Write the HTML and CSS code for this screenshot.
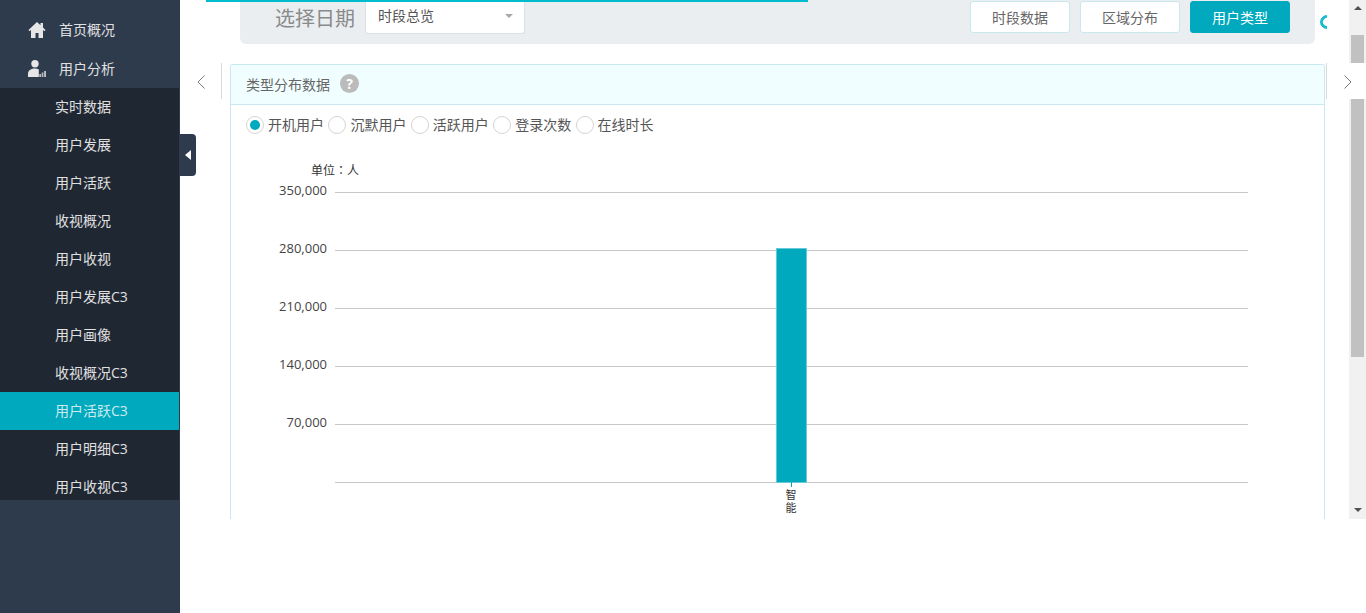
FILE: index.html
```html
<!DOCTYPE html>
<html>
<head>
    <meta charset="utf-8">
    <link rel="stylesheet" href="styles.css">
</head>
<body>
    <div id="sidebar">
        <div class="top-item">
            <svg class="top-icon" viewBox="0 0 18 18"><path d="M9 1 0.5 9l1 1.2L3 9v8h4.500v-5h3v5H15V9l1.500 1.200 1-1.200L15 6.600V2h-2.500v2.300z" fill="#e6e6e6"/></svg>
            <span class="top-label">首页概况</span>
        </div>
        <div class="top-item">
            <svg class="top-icon" viewBox="0 0 18 18"><circle cx="7" cy="3.800" r="3.700" fill="#e6e6e6"/><path d="M0 17v-3.500C0 10.500 3.200 8.500 7 8.500c1.500 0 2.800.3 3.800 1V17z" fill="#e6e6e6"/><path d="M11.300 17v-3h1.700v3zM13.700 17v-4.500h1.700V17zM16.100 17v-6H18v6z" fill="#bdbdbd"/></svg>
            <span class="top-label">用户分析</span>
        </div>
        <ul id="submenu">
            <li>实时数据</li>
            <li>用户发展</li>
            <li>用户活跃</li>
            <li>收视概况</li>
            <li>用户收视</li>
            <li>用户发展C3</li>
            <li>用户画像</li>
            <li>收视概况C3</li>
            <li class="active">用户活跃C3</li>
            <li>用户明细C3</li>
            <li>用户收视C3</li>
        </ul>
        <div id="collapse"><span class="collapse-arrow"></span></div>
    </div>

    <div id="main">
        <div id="content">
            <div id="progress"></div>
            <div id="spinner"></div>
            <div id="filter">
                <span class="filter-label">选择日期</span>
                <div class="select">
                    <span>时段总览</span>
                    <span class="caret"></span>
                </div>
                <div class="tabs">
                    <div class="tab">时段数据</div>
                    <div class="tab">区域分布</div>
                    <div class="tab current">用户类型</div>
                </div>
            </div>
            <div id="row">
                <div class="side side-left">
                    <svg class="chevron" viewBox="0 0 8 14"><path d="M7.500 .5 1 7l6.500 6.500" fill="none" stroke="#777c83" stroke-width="1"/></svg>
                </div>
                <div id="panel">
                    <div class="panel-head">
                        <span>类型分布数据</span>
                        <span class="help">?</span>
                    </div>
                    <div class="radios">
                        <label class="radio on"><i></i>开机用户</label>
                        <label class="radio"><i></i>沉默用户</label>
                        <label class="radio"><i></i>活跃用户</label>
                        <label class="radio"><i></i>登录次数</label>
                        <label class="radio"><i></i>在线时长</label>
                    </div>
                    <svg id="chart" viewBox="231 150 1093 369">
                        <text class="unit" x="311" y="175">单位<tspan class="colon">：</tspan>人</text>
                        <g class="grid">
                            <line x1="335" x2="1248" y1="192.500" y2="192.500"/>
                            <line x1="335" x2="1248" y1="250.500" y2="250.500"/>
                            <line x1="335" x2="1248" y1="308.500" y2="308.500"/>
                            <line x1="335" x2="1248" y1="366.500" y2="366.500"/>
                            <line x1="335" x2="1248" y1="424.500" y2="424.500"/>
                            <line x1="335" x2="1248" y1="482.500" y2="482.500"/>
                        </g>
                        <g class="ticks">
                            <text x="327" y="195">350,000</text>
                            <text x="327" y="253">280,000</text>
                            <text x="327" y="311">210,000</text>
                            <text x="327" y="369">140,000</text>
                            <text x="327" y="427">70,000</text>
                        </g>
                        <rect class="bar" x="776.500" y="248.500" width="30" height="234"/>
                        <line class="tick" x1="791.500" x2="791.500" y1="482" y2="487"/>
                        <text class="cat" x="791" y="499">智</text>
                        <text class="cat" x="791" y="512">能</text>
                    </svg>
                </div>
                <div class="side side-right">
                    <svg class="chevron" viewBox="0 0 8 14"><path d="M.5 .5 7 7 .5 13.500" fill="none" stroke="#777c83" stroke-width="1"/></svg>
                </div>
            </div>
        </div>
        <div id="scrollbar">
            <span class="sb-up"></span>
            <div class="sb-thumb"></div>
            <span class="sb-down"></span>
        </div>
    </div>
</body>
</html>
```

FILE: styles.css
```css
html, body {
    height: 100%;
    margin: 0;
    overflow: hidden;
}
body {
    display: flex;
    background: #fff;
    font-family: "Open Sans", "Noto Sans CJK SC", sans-serif;
    font-size: 14px;
    color: #333;
}

/* sidebar */
#sidebar {
    width: 180px;
    flex: none;
    position: relative;
    padding-top: 10px;
    box-sizing: border-box;
    background: #2e3b4d;
    color: #e0e0e0;
}
.top-item {
    height: 39px;
    display: flex;
    align-items: center;
    padding-left: 28px;
}
.top-icon {
    width: 18px;
    height: 18px;
    margin-right: 13px;
}
.top-label {
    padding-bottom: 2px;
}
#submenu {
    list-style: none;
    height: 412px;
    overflow: hidden;
    margin: 0 1px 0 0;
    padding: 0;
    background: #1f2733;
}
#submenu li {
    height: 38px;
    line-height: 38px;
    padding-left: 55px;
}
#submenu li.active {
    background: #00a9bd;
    color: #cfe9ee;
}
#collapse {
    position: absolute;
    left: 180px;
    top: 134px;
    width: 16px;
    height: 42px;
    display: flex;
    align-items: center;
    justify-content: center;
    background: #2e3b4d;
    border-radius: 0 4px 4px 0;
}
.collapse-arrow {
    border-right: 6px solid #fff;
    border-top: 5px solid transparent;
    border-bottom: 5px solid transparent;
}

/* main */
#main {
    flex: 1;
    height: 519px;
    display: flex;
    position: relative;
}
#content {
    flex: 1;
    min-width: 0;
    overflow: hidden;
}
#progress {
    position: absolute;
    left: 26px;
    top: 0;
    width: 602px;
    height: 2px;
    background: #00bccd;
}
#spinner {
    position: absolute;
    left: 1140px;
    top: 15px;
    width: 14px;
    height: 14px;
    box-sizing: border-box;
    border: 3px solid transparent;
    border-left-color: #19bccf;
    border-top-color: #19bccf;
    border-radius: 50%;
    transform: rotate(-45deg);
}
#filter {
    height: 44px;
    margin: 0 34px 0 60px;
    display: flex;
    align-items: flex-start;
    background: #eaeef1;
    border-radius: 0 0 6px 6px;
}
.filter-label {
    margin: 6px 10px 0 35px;
    font-size: 20px;
    line-height: 26px;
    color: #8a8a8a;
}
.select {
    width: 160px;
    height: 34px;
    box-sizing: border-box;
    padding: 0 11px 4px 12px;
    display: flex;
    align-items: center;
    justify-content: space-between;
    background: #fff;
    border: 1px solid #dcdfe3;
    border-top: 0;
    border-radius: 0 0 3px 3px;
    color: #555;
}
.caret {
    margin-top: 3px;
    border-top: 4px solid #a8a8a8;
    border-left: 4px solid transparent;
    border-right: 4px solid transparent;
}
.tabs {
    margin: 1px 25px 0 auto;
    display: flex;
    gap: 10px;
}
.tab {
    width: 100px;
    height: 32px;
    line-height: 32px;
    box-sizing: border-box;
    text-align: center;
    color: #666;
    background: #fff;
    border: 1px solid #c9e8ef;
    border-radius: 3px;
}
.tab.current {
    background: #00a9bd;
    border-color: #00a9bd;
    color: #fff;
}

#row {
    margin-top: 20px;
    display: flex;
}
.side {
    height: 36px;
    display: flex;
    align-items: center;
    box-sizing: border-box;
    padding-top: 2px;
    margin-top: -1px;
}
.side-left {
    width: 42px;
    margin-right: 8px;
    justify-content: flex-end;
    padding-right: 16px;
    border-right: 1px solid #d9d9d9;
}
.side-right {
    position: absolute;
    left: 1146px;
    top: 63px;
    width: 40px;
    margin: 0;
    padding-left: 17px;
    background: #fff;
    border-left: 1px solid #d9d9d9;
    z-index: 1;
}
.chevron {
    width: 8px;
    height: 14px;
}
#panel {
    width: 1095px;
    height: 455px;
    box-sizing: border-box;
    overflow: hidden;
    border: 1px solid #c9e8ef;
    border-bottom: 0;
    border-radius: 3px 3px 0 0;
}
.panel-head {
    height: 40px;
    box-sizing: border-box;
    display: flex;
    align-items: center;
    gap: 10px;
    padding: 0 0 2px 15px;
    background: #f1feff;
    border-bottom: 1px solid #c9e8ef;
    color: #666;
}
.help {
    width: 19px;
    height: 19px;
    line-height: 19px;
    text-align: center;
    border-radius: 50%;
    background: #bbb;
    color: #fff;
    font-weight: 700;
}
.radios {
    height: 45px;
    padding: 11px 0 0 15px;
    box-sizing: border-box;
    display: flex;
    gap: 4.400px;
}
.radio {
    display: flex;
    align-items: flex-start;
    line-height: 17px;
    color: #555;
}
.radio i {
    width: 18px;
    height: 18px;
    margin-right: 4px;
    box-sizing: border-box;
    border: 1px solid #d5d5d5;
    border-radius: 50%;
    display: flex;
    align-items: center;
    justify-content: center;
}
.radio.on i::after {
    content: "";
    width: 10px;
    height: 10px;
    border-radius: 50%;
    background: #00a9bd;
}
#chart {
    display: block;
    width: 1093px;
    height: 369px;
}
#chart text {
    font-family: "Open Sans", "Noto Sans CJK SC", sans-serif;
}
#chart .colon {
    font-family: "Noto Sans CJK TC", sans-serif;
}
.unit {
    font-size: 12px;
    fill: #333;
}
.grid line {
    stroke: #c8c8c8;
    stroke-width: 1;
}
.ticks text {
    font-size: 13px;
    fill: #444;
    text-anchor: end;
}
.bar {
    fill: #00a9bd;
    stroke: #66cbd7;
    stroke-width: 1;
}
.tick {
    stroke: #00a9bd;
}
.cat {
    font-size: 11px;
    fill: #333;
    text-anchor: middle;
}

/* scrollbar */
#scrollbar {
    width: 17px;
    flex: none;
    position: relative;
    background: #f1f1f1;
}
.sb-thumb {
    width: 13px;
    height: 322px;
    margin: 0 0 0 2px;
    position: relative;
    top: 35px;
    background: #c1c1c1;
}
.sb-up, .sb-down {
    position: absolute;
    left: 5px;
    border-left: 4px solid transparent;
    border-right: 4px solid transparent;
}
.sb-up {
    top: 6px;
    border-bottom: 4px solid #505050;
}
.sb-down {
    bottom: 7px;
    border-top: 4px solid #505050;
}
```
